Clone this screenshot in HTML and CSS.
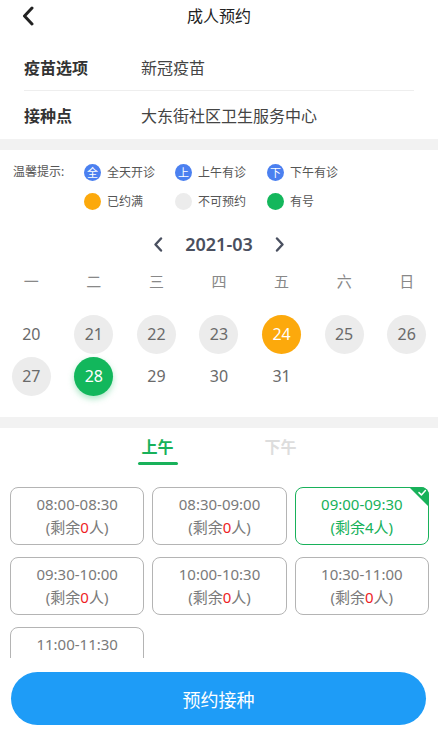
FILE: index.html
```html
<!DOCTYPE html>
<html lang="zh-CN">
<head>
  <meta charset="UTF-8">
  <meta name="viewport" content="width=device-width, initial-scale=1.0">
  <title>成人预约</title>
  <link rel="stylesheet" href="styles.css">
</head>
<body>
  <div class="page">
    <div class="header">
      <span class="back">
        <svg width="12" height="20" viewBox="0 0 12 20"><path d="M10 2 L2.5 10 L10 18" fill="none" stroke="#222" stroke-width="3" stroke-linecap="round" stroke-linejoin="round"/></svg>
      </span>
      <h1 class="title">成人预约</h1>
    </div>

    <div class="info">
      <div class="info-row">
        <span class="info-label">疫苗选项</span>
        <span class="info-value">新冠疫苗</span>
      </div>
      <div class="info-row">
        <span class="info-label">接种点</span>
        <span class="info-value">大东街社区卫生服务中心</span>
      </div>
    </div>

    <div class="band"></div>

    <div class="legend">
      <span class="legend-title">温馨提示:</span>
      <div class="legend-grid">
        <span class="legend-item"><i class="dot blue">全</i>全天开诊</span>
        <span class="legend-item"><i class="dot blue">上</i>上午有诊</span>
        <span class="legend-item"><i class="dot blue">下</i>下午有诊</span>
        <span class="legend-item"><i class="dot orange"></i>已约满</span>
        <span class="legend-item"><i class="dot gray"></i>不可预约</span>
        <span class="legend-item"><i class="dot green"></i>有号</span>
      </div>
    </div>

    <div class="month-nav">
      <svg width="10" height="15" viewBox="0 0 10 15"><path d="M8 1.5 L2.5 7.5 L8 13.5" fill="none" stroke="#4a5060" stroke-width="2.4" stroke-linecap="round" stroke-linejoin="round"/></svg>
      <span class="month">2021-03</span>
      <svg width="10" height="15" viewBox="0 0 10 15"><path d="M2 1.5 L7.5 7.5 L2 13.5" fill="none" stroke="#4a5060" stroke-width="2.4" stroke-linecap="round" stroke-linejoin="round"/></svg>
    </div>

    <div class="week">
      <span>一</span><span>二</span><span>三</span><span>四</span><span>五</span><span>六</span><span>日</span>
    </div>

    <div class="days">
      <span class="day">20</span>
      <span class="day off">21</span>
      <span class="day off">22</span>
      <span class="day off">23</span>
      <span class="day full">24</span>
      <span class="day off">25</span>
      <span class="day off">26</span>
      <span class="day off">27</span>
      <span class="day open">28</span>
      <span class="day">29</span>
      <span class="day">30</span>
      <span class="day">31</span>
    </div>

    <div class="band"></div>

    <div class="slots-panel">
      <div class="tabs">
        <div class="tab active">上午<span class="tab-line"></span></div>
        <div class="tab">下午</div>
      </div>

      <div class="slots">
        <div class="slot"><span>08:00-08:30</span><span>(剩余<em>0</em>人)</span></div>
        <div class="slot"><span>08:30-09:00</span><span>(剩余<em>0</em>人)</span></div>
        <div class="slot selected">
          <span>09:00-09:30</span><span>(剩余4人)</span>
          <svg class="corner" width="20" height="20" viewBox="0 0 20 20"><path d="M0 0 H12 A8 8 0 0 1 20 8 V20 Z" fill="#18b15a"/><path d="M10 5.6 L12.4 7.9 L16.4 3.6" fill="none" stroke="#fff" stroke-width="1.5" stroke-linecap="round" stroke-linejoin="round"/></svg>
        </div>
        <div class="slot"><span>09:30-10:00</span><span>(剩余<em>0</em>人)</span></div>
        <div class="slot"><span>10:00-10:30</span><span>(剩余<em>0</em>人)</span></div>
        <div class="slot"><span>10:30-11:00</span><span>(剩余<em>0</em>人)</span></div>
        <div class="slot"><span>11:00-11:30</span><span>(剩余<em>0</em>人)</span></div>
      </div>
    </div>

    <button class="submit">预约接种</button>
  </div>
</body>
</html>
```

FILE: styles.css
```css
* {
  box-sizing: border-box;
}

body {
  margin: 0;
  background: #fff;
  font-family: "Noto Sans", "Noto Sans CJK SC", sans-serif;
  color: #333;
}

.page {
  width: 438px;
  height: 745px;
  overflow: hidden;
}

/* header */
.header {
  position: relative;
  height: 32px;
}
.back {
  position: absolute;
  left: 22px;
  top: 6px;
}
.title {
  margin: 0;
  font-size: 16px;
  font-weight: normal;
  line-height: 32px;
  text-align: center;
  color: #222;
}

/* vaccine info */
.info {
  padding: 11px 24px 0;
}
.info-row {
  display: flex;
  align-items: center;
  height: 48px;
  font-size: 16px;
}
.info-row:first-child {
  border-bottom: 1px solid #eee;
}
.info-label {
  width: 117px;
  font-weight: bold;
  color: #333;
}
.info-value {
  color: #444;
}

.band {
  height: 11px;
  background: #f2f2f2;
}

/* legend */
.legend {
  display: flex;
  padding: 8px 0 0 13px;
  font-size: 12px;
  color: #555;
}
.legend-title {
  width: 71px;
  line-height: 28px;
}
.legend-grid {
  display: grid;
  grid-template-columns: 91px 92px 91px;
  grid-auto-rows: 28px;
  row-gap: 1px;
}
.legend-item {
  display: flex;
  align-items: center;
  gap: 6px;
}
.dot {
  display: flex;
  align-items: center;
  justify-content: center;
  width: 17px;
  height: 17px;
  border-radius: 50%;
  font-style: normal;
  font-size: 11px;
  color: #fff;
}
.dot.blue { background: #4b80f0; }
.dot.orange { background: #fca90c; }
.dot.gray { background: #ececec; }
.dot.green { background: #14b75c; }

/* calendar */
.month-nav {
  display: flex;
  align-items: center;
  justify-content: center;
  gap: 22px;
  height: 30px;
  margin-top: 14px;
}
.month {
  font-size: 18px;
  font-weight: 600;
  color: #4a4f5e;
}
.week {
  display: grid;
  grid-template-columns: repeat(7, 1fr);
  height: 30px;
  margin-top: 7px;
  font-size: 15px;
  line-height: 30px;
  text-align: center;
  color: #888;
}
.days {
  display: grid;
  grid-template-columns: repeat(7, 1fr);
  grid-auto-rows: 42px;
  justify-items: center;
  align-items: center;
  margin-top: 17px;
  padding-bottom: 20px;
}
.day {
  display: flex;
  align-items: center;
  justify-content: center;
  width: 39px;
  height: 39px;
  border-radius: 50%;
  font-size: 16px;
  color: #6a6a6a;
}
.day.off { background: #ececec; }
.day.full { background: #fca90c; color: #fff; }
.day.open {
  background: #12b75c;
  color: #fff;
  box-shadow: 0 3px 6px rgba(18, 183, 92, 0.35);
}

/* time slots */
.slots-panel {
  height: 230px;
  overflow: hidden;
}
.tabs {
  display: flex;
  justify-content: center;
  gap: 83px;
  padding-top: 8px;
}
.tab {
  display: flex;
  flex-direction: column;
  align-items: center;
  width: 40px;
  font-size: 16px;
  font-weight: bold;
  line-height: 22px;
  color: #ddd;
}
.tab.active {
  color: #18b15a;
}
.tab-line {
  width: 40px;
  height: 3px;
  margin-top: 4px;
  border-radius: 2px;
  background: #18b15a;
}
.slots {
  display: grid;
  grid-template-columns: repeat(3, 1fr);
  column-gap: 8px;
  row-gap: 12px;
  margin-top: 22px;
  padding: 0 9px 0 10px;
}
.slot {
  position: relative;
  display: flex;
  flex-direction: column;
  align-items: center;
  justify-content: center;
  height: 58px;
  border: 1px solid #b4b4b4;
  border-radius: 8px;
  font-size: 15px;
  line-height: 23px;
  color: #7a7a7a;
}
.slot em {
  font-style: normal;
  color: #ee1c25;
}
.slot.selected {
  border-color: #18b15a;
  color: #18b15a;
}
.corner {
  position: absolute;
  top: -1px;
  right: -1px;
}

/* submit */
.submit {
  display: block;
  width: 415px;
  height: 53px;
  margin: 14px 0 0 11px;
  border: none;
  border-radius: 27px;
  background: #1e9cf7;
  font-family: inherit;
  font-size: 18px;
  color: #fff;
}
```
